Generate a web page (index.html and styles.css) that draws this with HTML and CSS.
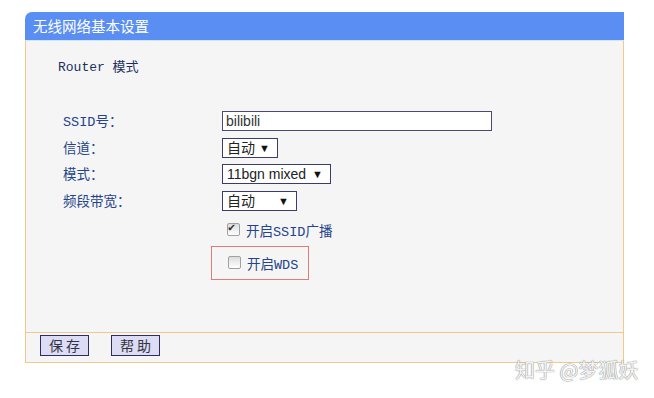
FILE: index.html
```html
<!DOCTYPE html>
<html lang="zh">
<head>
    <meta charset="UTF-8">
    <title>无线网络基本设置</title>
    <link rel="stylesheet" href="styles.css">
</head>
<body>
    <div class="window">
        <div class="title">无线网络基本设置</div>
        <div class="panel">
            <div class="mode">Router 模式</div>
            <div class="form">
                <label class="label" for="ssid">SSID号：</label>
                <div><input id="ssid" class="text-input" type="text" value="bilibili"></div>
                <label class="label">信道：</label>
                <div><span class="select w-channel">自动</span></div>
                <label class="label">模式：</label>
                <div><span class="select w-mode">11bgn mixed</span></div>
                <label class="label">频段带宽：</label>
                <div><span class="select w-band">自动</span></div>
            </div>
            <div class="checks">
                <label class="check"><span class="box checked"></span>开启SSID广播</label>
                <div class="mark">
                    <label class="check"><span class="box"></span>开启WDS</label>
                </div>
            </div>
            <div class="footer">
                <button class="btn">保 存</button>
                <button class="btn">帮 助</button>
            </div>
        </div>
    </div>
    <div class="watermark">知乎 @梦狐妖</div>
</body>
</html>
```

FILE: styles.css
```css
body {
    margin: 0;
    background-color: #ffffff;
    font-family: "Liberation Sans", "Noto Sans CJK SC", sans-serif;
}
.window {
    margin: 12px 0 0 25px;
    width: 599px;
}
.title {
    height: 28px;
    line-height: 28px;
    padding-left: 8px;
    background-color: #5b8ef2;
    border-bottom: 1px solid #cfe8f5;
    border-radius: 7px 0 0 0;
    color: #ffffff;
    font-size: 14.5px;
    font-family: "Noto Sans CJK SC", sans-serif;
}
.panel {
    background-color: #f5f5f5;
    border: 1px solid #f3c98b;
    border-top: none;
}
.mode {
    padding: 18px 0 0 32px;
    height: 17px;
    font-size: 13px;
    line-height: 17px;
    color: #1c2f5e;
    font-family: "Liberation Mono", "Noto Sans CJK SC", monospace;
}
.form {
    display: grid;
    grid-template-columns: 159px 1fr;
    grid-auto-rows: 20px;
    row-gap: 6.5px;
    margin-top: 35px;
    padding-left: 37px;
}
.label {
    padding-top: 2px;
    font-size: 13.5px;
    line-height: 20px;
    color: #24438a;
    font-family: "Liberation Mono", "Noto Sans CJK SC", monospace;
}
.text-input {
    box-sizing: border-box;
    width: 270px;
    height: 20px;
    margin: 0;
    padding: 0 3px;
    border: 1px solid #4a4a78;
    background-color: #ffffff;
    font-size: 14px;
    font-family: "Liberation Sans", sans-serif;
    color: #333333;
}
.select {
    position: relative;
    display: inline-block;
    box-sizing: border-box;
    height: 20px;
    padding-left: 4px;
    border: 1px solid #3c3c6c;
    background-color: #ffffff;
    font-size: 14px;
    line-height: 18px;
    color: #222222;
}
.select::after {
    content: "\25BC";
    position: absolute;
    right: 7px;
    top: 0;
    font-size: 11px;
    color: #111111;
}
.w-channel { width: 56px; }
.w-mode { width: 109px; }
.w-band { width: 75px; }
.checks {
    padding: 8px 0 52px 185px;
}
.check {
    display: flex;
    align-items: center;
    gap: 6px;
    height: 22px;
    padding-left: 16px;
    font-size: 13.5px;
    color: #24438a;
    font-family: "Liberation Mono", "Noto Sans CJK SC", monospace;
}
.box {
    box-sizing: border-box;
    width: 13px;
    height: 13px;
    border: 1px solid #a0a0a0;
    border-radius: 2px;
    background: linear-gradient(#dcdcdc, #ffffff);
    position: relative;
}
.box.checked::after {
    content: "\2714";
    position: absolute;
    left: 0;
    top: -4px;
    font-size: 12px;
    color: #333333;
}
.mark {
    width: 96px;
    height: 32px;
    margin-top: 5px;
    border: 1px solid #e27a7a;
    display: flex;
    align-items: center;
}
.footer {
    display: flex;
    gap: 22px;
    padding: 2px 0 6px 14px;
    border-top: 1px solid #f3c98b;
}
.btn {
    width: 49px;
    height: 21px;
    margin: 0;
    padding: 0;
    border: 1px solid #2e2e5e;
    background-color: #dcdcf4;
    font-size: 14px;
    line-height: 19px;
    color: #333344;
    font-family: "Noto Sans CJK SC", sans-serif;
}
.watermark {
    position: absolute;
    left: 515px;
    top: 355px;
    font-size: 20px;
    color: #f4f4f4;
    font-family: "Noto Sans CJK SC", sans-serif;
    text-shadow: 0 0 1px #8a8a8a, 0 0 1px #8a8a8a;
}
```
